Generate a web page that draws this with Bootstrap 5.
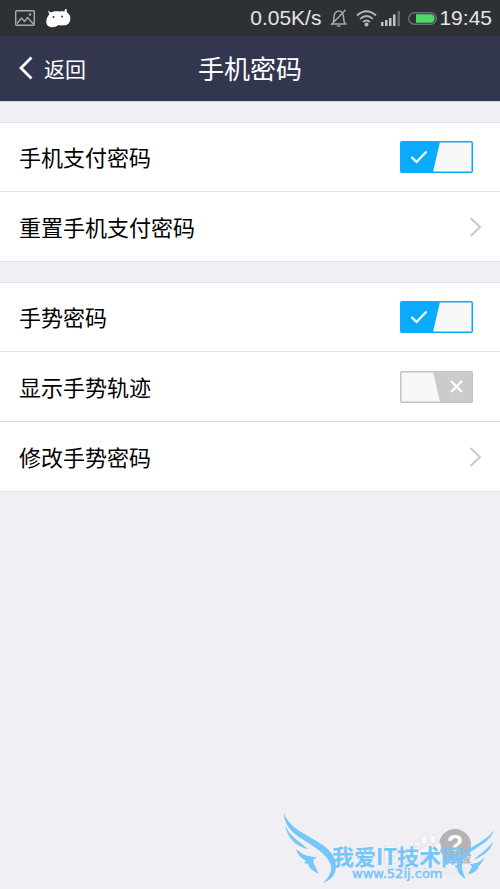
<!DOCTYPE html>
<html lang="zh-CN">
<head>
<meta charset="utf-8">
<meta name="viewport" content="width=device-width, initial-scale=1">
<title>手机密码</title>
<link href="https://cdn.jsdelivr.net/npm/bootstrap@5.3.0/dist/css/bootstrap.min.css" rel="stylesheet">
<style>
body { background: #efeff4; color: #000; font-family: "Noto Sans CJK SC", sans-serif; }
.status-strip { height: 36px; padding: 0 8px 0 15px; background: #2d3135; color: #e4e5e6; font: 21px/36px "Liberation Sans", sans-serif; }
.clock { margin-left: 2px; }
.title-bar { height: 66px; background: #32374f; border-bottom: 1px solid #d5d5dd; color: #fff; }
.title-bar h1 { padding-bottom: 2px; font-size: 26px; line-height: 36px; font-weight: 400; }
.back-link { left: 18px; padding-bottom: 2px; color: #fff; font-size: 21px; line-height: 32px; gap: 11px; }
.settings { margin-top: 20px; --bs-list-group-border-color: #e0e0e3; border-top: 1px solid #e0e0e3; }
.settings .list-group-item { height: 70px; padding: 0 27px 0 19px; font-size: 22px; line-height: 32px; color: #000; border-color: #e0e0e3; }
.settings .list-group-item:first-child { height: 69px; }
.settings .list-group-item:last-child { border-bottom-width: 1px; }
.settings .go-row { padding-right: 18px; }
.row-text { padding-bottom: 2px; }
.toggle .pic-on, .toggle input:checked ~ .pic-off { display: none; }
.toggle input:checked ~ .pic-on { display: block; }
.toggle svg { display: block; }
.brand-zone { right: 0; bottom: 0; width: 230px; height: 109px; }
.help-btn { right: 29px; bottom: 28px; width: 32px; height: 32px; background: #b4b4b6; color: #fff; font: bold 27px/32px "Liberation Sans", sans-serif; }
.brand-art { pointer-events: none; }
</style>
<script src="https://cdn.jsdelivr.net/npm/bootstrap@5.3.0/dist/js/bootstrap.bundle.min.js"></script>
</head>
<body class="min-vh-100 position-relative">
<div class="status-strip d-flex align-items-center">
  <svg width="20" height="16" viewBox="0 0 20 16" fill="none" stroke="#a9abad" stroke-width="1.4" aria-hidden="true"><rect x=".7" y=".7" width="18.6" height="14.6" rx="1"/><path d="M2 13.500 6.500 8 9.500 11.500 12.500 7.500 18.500 14"/><circle cx="15" cy="4.500" r=".6" fill="#a9abad"/></svg>
  <svg class="ms-2" width="30" height="22" viewBox="43 6 30 22" aria-hidden="true"><path d="M48 9.500 50.800 11.500C53.500 10.200 57 10 60 10.600 61.500 10.200 63 10.200 64.500 10.500L65 8 66.500 8 67 11.500C69.500 13 70.500 15 70.300 18 70 22 67.500 24.300 64 24.300 61.500 24.500 59.500 24.300 57.800 24.200 55.800 26 53 26.500 50.500 26 47.500 25.500 46 23 46.300 20 46.500 17.200 47.800 15 49.300 13.500z" fill="#fff"/><circle cx="53.500" cy="16" r="1" fill="#2d3135"/><circle cx="62" cy="15.500" r="1" fill="#2d3135"/></svg>
  <span class="ms-auto">0.05K/s</span>
  <svg class="ms-2" width="19" height="20" viewBox="0 0 19 20" fill="none" stroke="#a5a7a9" stroke-width="1.5" aria-hidden="true"><path d="M2 16h15.500M4 15.500C5.500 13 4 7 6.500 4.500 8.500 2.500 11.500 2.500 13 4.500 15.500 7 14 13 15.800 15.500M8.300 17.500q1.500 1.500 3 0M16.500 2 2 17"/></svg>
  <svg class="ms-2" width="21" height="18" viewBox="0 0 21 18" fill="none" stroke="#b5b7b9" stroke-width="1.700" aria-hidden="true"><path d="M1 6.500q9.500-8.500 19 0M4 10q6.500-6 13 0M7 13q3.500-3 7 0"/><circle cx="10.500" cy="15.500" r="1.200" fill="#d5d5d5"/></svg>
  <svg class="ms-1" width="19" height="16" viewBox="0 0 19 16" fill="#c3c4c6" aria-hidden="true"><path d="M0 12h2.500v4H0zM4 10h2.500v6H4zM8 8h2.500v8H8zM12 4.500h2.500V16H12z"/><path d="M16.500 1H19v15h-2.500z" fill="#66696d"/></svg>
  <svg class="ms-2" width="29" height="13" viewBox="0 0 29 13" aria-hidden="true"><rect x=".7" y=".7" width="27.600" height="11.600" rx="5.800" fill="none" stroke="#6d7074" stroke-width="1.400"/><path d="M8 2.300h14.500a4.200 4.200 0 0 1 0 8.400H8z" fill="#4cd964"/></svg>
  <span class="clock">19:45</span>
</div>
<header class="title-bar position-relative d-flex align-items-center justify-content-center">
  <a href="#" class="back-link position-absolute d-flex align-items-center text-decoration-none">
    <svg width="15" height="24" viewBox="0 0 15 24" fill="none" stroke="#fff" stroke-width="2.800" aria-hidden="true"><path d="M13.500 1.500 3 12l10.500 10.500"/></svg>返回</a>
  <h1 class="m-0">手机密码</h1>
</header>
<main>
  <div class="settings list-group list-group-flush">
    <label class="toggle list-group-item d-flex align-items-center justify-content-between"><span class="row-text">手机支付密码</span>
      <input class="visually-hidden" type="checkbox" checked>
      <svg class="pic-on ms-auto" width="73" height="32" viewBox="0 0 73 32"><rect x=".75" y=".75" width="71.500" height="30.500" rx="1" fill="#f8f8f8" stroke="#0aaaff" stroke-width="1.500"/><path d="M1 1h39l-7 30H1z" fill="#0aaaff"/><path d="m11.500 16 5 5 10-10.500" fill="none" stroke="#fff" stroke-width="2.200"/></svg>
      <svg class="pic-off ms-auto" width="73" height="32" viewBox="0 0 73 32"><rect x=".75" y=".75" width="71.500" height="30.500" rx="1" fill="#f8f8f8" stroke="#c4c4c4" stroke-width="1.500"/><path d="M33 1h39v30H40z" fill="#cbcbcb"/><path d="m51 10 11 11m0-11L51 21" fill="none" stroke="#fff" stroke-width="2.200"/></svg>
    </label>
    <a href="#" class="go-row list-group-item list-group-item-action d-flex align-items-center justify-content-between"><span class="row-text">重置手机支付密码</span>
      <svg width="13" height="20" viewBox="0 0 13 20" fill="none" stroke="#c9c9cb" stroke-width="2" aria-hidden="true"><path d="m1.500 1 9.500 9-9.500 9"/></svg></a>
  </div>
  <div class="settings list-group list-group-flush">
    <label class="toggle list-group-item d-flex align-items-center justify-content-between"><span class="row-text">手势密码</span>
      <input class="visually-hidden" type="checkbox" checked>
      <svg class="pic-on ms-auto" width="73" height="32" viewBox="0 0 73 32"><rect x=".75" y=".75" width="71.500" height="30.500" rx="1" fill="#f8f8f8" stroke="#0aaaff" stroke-width="1.500"/><path d="M1 1h39l-7 30H1z" fill="#0aaaff"/><path d="m11.500 16 5 5 10-10.500" fill="none" stroke="#fff" stroke-width="2.200"/></svg>
      <svg class="pic-off ms-auto" width="73" height="32" viewBox="0 0 73 32"><rect x=".75" y=".75" width="71.500" height="30.500" rx="1" fill="#f8f8f8" stroke="#c4c4c4" stroke-width="1.500"/><path d="M33 1h39v30H40z" fill="#cbcbcb"/><path d="m51 10 11 11m0-11L51 21" fill="none" stroke="#fff" stroke-width="2.200"/></svg>
    </label>
    <label class="toggle list-group-item d-flex align-items-center justify-content-between"><span class="row-text">显示手势轨迹</span>
      <input class="visually-hidden" type="checkbox">
      <svg class="pic-on ms-auto" width="73" height="32" viewBox="0 0 73 32"><rect x=".75" y=".75" width="71.500" height="30.500" rx="1" fill="#f8f8f8" stroke="#0aaaff" stroke-width="1.500"/><path d="M1 1h39l-7 30H1z" fill="#0aaaff"/><path d="m11.500 16 5 5 10-10.500" fill="none" stroke="#fff" stroke-width="2.200"/></svg>
      <svg class="pic-off ms-auto" width="73" height="32" viewBox="0 0 73 32"><rect x=".75" y=".75" width="71.500" height="30.500" rx="1" fill="#f8f8f8" stroke="#c4c4c4" stroke-width="1.500"/><path d="M33 1h39v30H40z" fill="#cbcbcb"/><path d="m51 10 11 11m0-11L51 21" fill="none" stroke="#fff" stroke-width="2.200"/></svg>
    </label>
    <a href="#" class="go-row list-group-item list-group-item-action d-flex align-items-center justify-content-between"><span class="row-text">修改手势密码</span>
      <svg width="13" height="20" viewBox="0 0 13 20" fill="none" stroke="#c9c9cb" stroke-width="2" aria-hidden="true"><path d="m1.500 1 9.500 9-9.500 9"/></svg></a>
  </div>
</main>
<div class="brand-zone position-absolute">
  <button type="button" class="help-btn position-absolute border-0 rounded-circle p-0">?</button>
  <svg class="brand-art position-absolute top-0 start-0" width="230" height="109" viewBox="0 0 230 109">
    <g fill="#f8f8fa" stroke="#dadade" stroke-width=".7">
      <ellipse cx="147" cy="66" rx="3.500" ry="4.500"/><ellipse cx="154" cy="59.500" rx="3.500" ry="4.500"/><ellipse cx="163" cy="59.500" rx="3.500" ry="4.500"/><ellipse cx="168" cy="67" rx="3" ry="4.500"/><path d="M157 66c5 0 10 7 10 11s-4 5-10 4c-5 1-10 0-10-4s4-11 10-11z"/>
      <g font-family="Liberation Sans, sans-serif" font-weight="bold"><text x="113" y="83" font-size="23">Bai</text><text x="150" y="80" font-size="11">du</text><text x="115" y="94" font-size="10" stroke-width=".3">jingyan.baidu.com</text></g>
      <text x="173" y="82" font-size="14" font-family="Noto Sans CJK SC, sans-serif" fill="#e7e7e9" stroke="#aaa">经验</text>
    </g>
    <g fill="#74c6fb">
      <path d="M14 33C18 45 29 51 43 59C56 66 66 74 66 86C66 95 61 100 53 103C60 96 63 90 60 83C56 74 47 69 37 62C25 55 14 47 14 33zM15 45C20 57 29 61 38 69C27 67 17 58 15 45zM26 69C33 75 38 77 47 77L43 80L44 84L49 94C43 91 39 88 38 84L34 83L36 81C31 78 28 75 26 69zM224 50C221 60 211 65 202 71C193 77 188 84 196 99C187 95 184 85 190 77C199 66 216 62 224 50zM223 62C221 71 212 76 204 80C209 74 216 71 223 62zM215 77C212 84 208 85 208 89C205 91 203 94 198 94L202 87L200 84C205 84 210 82 215 77z"/>
      <text x="62" y="85" font-size="22" font-weight="700" font-family="Noto Sans CJK SC, sans-serif">我爱IT技术网</text>
      <text x="82" y="98" font-size="13" stroke="#74c6fb" stroke-width=".5" font-family="DejaVu Sans, sans-serif">www.52ij.com</text>
    </g>
  </svg>
</div>
</body>
</html>
